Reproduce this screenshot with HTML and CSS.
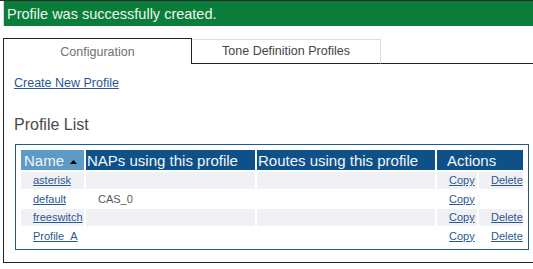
FILE: index.html
```html
<!DOCTYPE html>
<html lang="en">
<head>
    <meta charset="UTF-8">
    <meta name="viewport" content="width=device-width, initial-scale=1.0">
    <title>Tone Profiles</title>
    <link rel="stylesheet" href="styles.css">
</head>
<body>
    <div class="notice">Profile was successfully created.</div>

    <div class="tabs">
        <div class="tab active">Configuration</div>
        <div class="tab">Tone Definition Profiles</div>
        <div class="tab-fill"></div>
    </div>

    <div class="panel">
        <a class="create" href="#">Create New Profile</a>
        <h2>Profile List</h2>

        <div class="list-box">
            <table class="list">
                <colgroup>
                    <col class="c-name">
                    <col class="c-naps">
                    <col class="c-routes">
                    <col class="c-copy">
                    <col class="c-delete">
                </colgroup>
                <thead>
                    <tr>
                        <th class="sorted">Name <svg class="sort" width="7" height="4" viewBox="0 0 7 4"><path d="M0 4 L3.5 0 L7 4 Z" fill="#000"/></svg></th>
                        <th>NAPs using this profile</th>
                        <th>Routes using this profile</th>
                        <th class="actions" colspan="2">Actions</th>
                    </tr>
                </thead>
                <tbody>
                    <tr class="alt">
                        <td><a href="#">asterisk</a></td>
                        <td></td>
                        <td></td>
                        <td><a href="#">Copy</a></td>
                        <td><a href="#">Delete</a></td>
                    </tr>
                    <tr>
                        <td><a href="#">default</a></td>
                        <td>CAS_0</td>
                        <td></td>
                        <td><a href="#">Copy</a></td>
                        <td></td>
                    </tr>
                    <tr class="alt">
                        <td><a href="#">freeswitch</a></td>
                        <td></td>
                        <td></td>
                        <td><a href="#">Copy</a></td>
                        <td><a href="#">Delete</a></td>
                    </tr>
                    <tr>
                        <td><a href="#">Profile_A</a></td>
                        <td></td>
                        <td></td>
                        <td><a href="#">Copy</a></td>
                        <td><a href="#">Delete</a></td>
                    </tr>
                </tbody>
            </table>
        </div>
    </div>
</body>
</html>
```

FILE: styles.css
```css
body {
    margin: 0;
    border-top: 1px solid #2a2a2a;
    font-family: "Liberation Sans", Arial, sans-serif;
    background: #fff;
    overflow: hidden;
}
a {
    color: #2a5893;
}
.notice {
    margin-left: 3px;
    border-left: 1px solid #d4ddd6;
    background-color: #0b7d3a;
    color: #eef4ee;
    font-size: 14.5px;
    line-height: 24px;
    padding: 1px 0 0 3px;
}
.tabs {
    display: flex;
    margin: 12px 0 0 3px;
}
.tab {
    box-sizing: border-box;
    width: 189px;
    font-size: 12.5px;
    text-align: center;
    color: #444;
    margin-top: 1px;
    line-height: 23px;
    border-top: 1px solid #dcdce4;
    border-right: 1px solid #dcdce4;
    border-bottom: 1px solid #222;
}
.tab.active {
    margin-top: 0;
    padding-top: 1px;
    line-height: 24px;
    color: #707070;
    border: 1px solid #222;
    border-bottom: none;
}
.tab-fill {
    flex: 1;
    border-bottom: 1px solid #222;
}
.panel {
    margin-left: 3px;
    border-left: 1px solid #222;
    border-bottom: 1px solid #222;
    padding: 12px 4px 12px 10px;
}
.create {
    display: block;
    width: max-content;
    font-size: 12.5px;
    line-height: 15px;
}
h2 {
    margin: 24px 0 10px 0;
    font-size: 16px;
    font-weight: normal;
    line-height: 19px;
    color: #4a4a4a;
}
.list-box {
    margin-left: 1px;
    border: 1px solid #1c5a8c;
    padding: 3px;
}
.list {
    width: 100%;
    table-layout: fixed;
    border-spacing: 2px;
}
.c-name { width: 63px; }
.c-naps { width: 169px; }
.c-routes { width: 178px; }
.c-copy { width: 40px; }
.c-delete { width: 44px; }
.list th {
    height: 20px;
    padding: 0 0 0 1px;
    background-color: #0e5189;
    color: #f2f6fa;
    font-size: 15px;
    font-weight: normal;
    text-align: left;
    white-space: nowrap;
}
.list th.sorted {
    padding-left: 3px;
    background-color: #5d9ac6;
}
.list th.actions {
    padding-left: 10px;
}
.sort {
    margin-left: 2px;
    vertical-align: middle;
}
.list td {
    height: 16.5px;
    padding: 0 0 0 12px;
    font-size: 11px;
    color: #5a5a5a;
    white-space: nowrap;
}
.list tr.alt td {
    background-color: #f0f1f5;
}
```
